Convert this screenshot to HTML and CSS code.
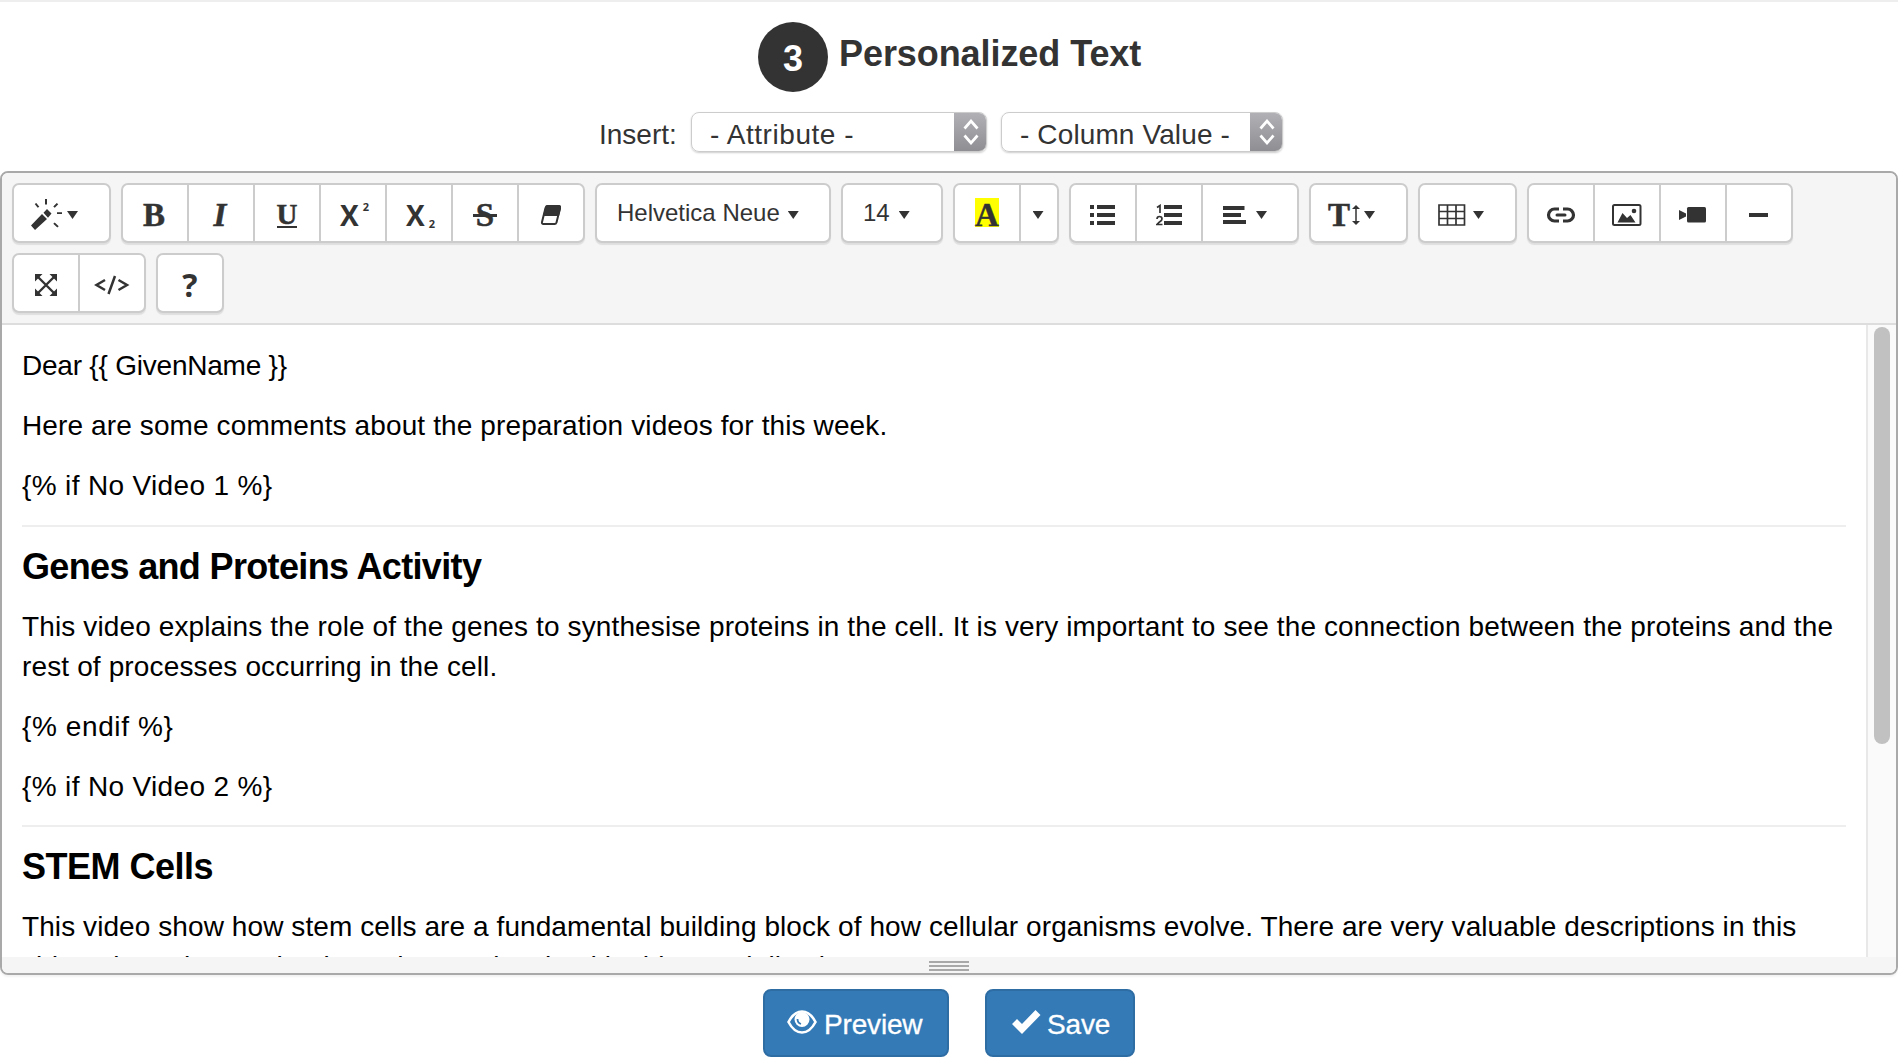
FILE: index.html
```html
<!DOCTYPE html>
<html lang="en">
<head>
<meta charset="utf-8">
<title>Personalized Text</title>
<link rel="stylesheet" href="styles.css">
</head>
<body>
<header class="step">
  <span class="step-number">3</span>
  <h1 class="step-title">Personalized Text</h1>
</header>
<div class="insert-row">
  <span class="insert-label">Insert:</span>
  <div class="select select-attribute"><span class="select-text attr-text">- Attribute -</span><span class="select-arrows"><svg width="16" height="26" viewBox="0 0 16 26"><path d="M1.500 9.500 8 2l6.500 7.500M1.500 16.500 8 24l6.500-7.500"/></svg></span></div>
  <div class="select select-column"><span class="select-text col-text">- Column Value -</span><span class="select-arrows"><svg width="16" height="26" viewBox="0 0 16 26"><path d="M1.500 9.500 8 2l6.500 7.500M1.500 16.500 8 24l6.500-7.500"/></svg></span></div>
</div>
<main class="editor">
  <div class="toolbar">
    <div class="group">
      <button class="btn w99 magic"><svg width="32" height="31" viewBox="0 0 32 34" preserveAspectRatio="none"><path d="M0 29 11 16.500l5 5.500L4 34zM12.500 15 16 11l4.500 5-3.500 4.500z" fill="#333"/><path d="M15 0v6M4.500 5l3 4M26.500 5l-3.500 4M26 15.500h5M23 26.500l4 4" stroke="#333" stroke-width="2" fill="none"/></svg><i class="caret"></i></button>
    </div>
    <div class="group">
      <button class="btn serif">B</button>
      <button class="btn serif italic">I</button>
      <button class="btn"><span class="serif under">U</span></button>
      <button class="btn script-btn">X<span class="sup">2</span></button>
      <button class="btn script-btn">X<span class="sub">2</span></button>
      <button class="btn"><span class="serif strike">S</span></button>
      <button class="btn"><svg width="22" height="22" viewBox="0 0 22 22"><path d="M7.500 2h10.500q2.500 0 2 2.500l-3.500 14q-.500 1.500-2 1.500H3.500q-2 0-1.500-2L5.500 4q.500-2 2-2z" fill="#fff" stroke="#333" stroke-width="2"/><path d="M7 1h12q2.500 0 2 3l-2 8H3l2-8q.500-3 2-3z" fill="#333"/></svg></button>
    </div>
    <div class="group">
      <button class="btn font-name"><span>Helvetica Neue</span><i class="caret"></i></button>
    </div>
    <div class="group">
      <button class="btn font-size"><span>14</span><i class="caret"></i></button>
    </div>
    <div class="group">
      <button class="btn"><span class="serif highlight">A</span></button>
      <button class="btn drop"><i class="caret"></i></button>
    </div>
    <div class="group">
      <button class="btn"><svg width="26" height="20" viewBox="0 0 26 20"><path d="M0 0h4v4H0zM7 0h18v4H7zM0 8h4v4H0zM7 8h18v4H7zM0 16h4v4H0zM7 16h18v4H7z" fill="#333"/></svg></button>
      <button class="btn"><svg width="26" height="22" viewBox="0 0 26 22"><path d="M8 1h18v4H8zM8 9h18v4H8zM8 17h18v4H8z" fill="#333"/><path d="M1 3.500 4 1.500V9M1 15q0-2.500 2.500-2.500T6 15q0 1.500-2.500 3L1 20.500h5.500" stroke="#333" stroke-width="1.700" fill="none"/></svg></button>
      <button class="btn align"><svg width="24" height="18" viewBox="0 0 24 18"><path d="M0 0h21.500v4H0zM0 7h18v4H0zM0 14h23v4H0z" fill="#333"/></svg><i class="caret"></i></button>
    </div>
    <div class="group">
      <button class="btn w99 height"><span class="serif">T</span><svg width="8" height="20" viewBox="0 0 8 20"><path d="M4 2v16" stroke="#333" stroke-width="1.500"/><path d="M4 0l4 4H0zM4 20l4-4H0z" fill="#333"/></svg><i class="caret"></i></button>
    </div>
    <div class="group">
      <button class="btn w99 table"><svg width="28" height="22" viewBox="0 0 28 22"><path d="M1 1h25.500v20H1zM1 7.500h25.500M1 14.500h25.500M9.500 1v20M18 1v20" stroke="#333" stroke-width="1.700" fill="none"/></svg><i class="caret"></i></button>
    </div>
    <div class="group">
      <button class="btn"><svg width="30" height="16" viewBox="0 0 30 16"><path d="M13 2H8.500a6 6 0 0 0 0 12H13M17 2h4.500a6 6 0 0 1 0 12H17" stroke="#333" stroke-width="3.200" fill="none"/><path d="M11 8h8" stroke="#333" stroke-width="3" stroke-linecap="round"/></svg></button>
      <button class="btn"><svg width="30" height="22" viewBox="0 0 30 22"><rect x="1" y="1" width="27.500" height="20" rx="1.500" fill="none" stroke="#333" stroke-width="2"/><path d="M5.500 18.500 10.500 9l4.500 5 3.500-3 5 7.500z" fill="#333"/><circle cx="22" cy="7" r="2.300" fill="#333"/></svg></button>
      <button class="btn nudge"><svg width="27" height="16" viewBox="0 0 27 16"><rect x="8" y="0" width="19" height="15.500" rx="1.500" fill="#333"/><path d="M0 3l7 3.500v3L0 13z" fill="#333"/></svg></button>
      <button class="btn nudge"><svg width="19" height="4" viewBox="0 0 19 4"><path d="M0 0h19v4H0z" fill="#333"/></svg></button>
    </div>
    <div class="group">
      <button class="btn"><svg width="22" height="22" viewBox="0 0 22 22"><path d="M3 3l16 16M19 3 3 19" stroke="#333" stroke-width="2.400"/><path d="M0 0h7.500L0 7.500zM22 0v7.500L14.500 0zM0 22v-7.500L7.500 22zM22 22h-7.500l7.500-7.500z" fill="#333"/></svg></button>
      <button class="btn"><svg width="36" height="20" viewBox="0 0 36 20"><path d="M11 5 2.500 10 11 15M24.500 5 33 10l-8.500 5M21 1l-6.500 18" stroke="#333" stroke-width="2.500" fill="none"/></svg></button>
    </div>
    <div class="group">
      <button class="btn help">?</button>
    </div>
  </div>
  <div class="body">
    <div class="editable">
      <p><span class="t-dear">Dear {{ GivenName }}</span></p>
      <p><span class="t-here">Here are some comments about the preparation videos for this week.</span></p>
      <p><span class="t-if">{% if No Video 1 %}</span></p>
      <hr>
      <h3><span class="t-genes">Genes and Proteins Activity</span></h3>
      <p><span class="t-long">This video explains the role of the genes to synthesise proteins in the cell. It is very important to see the connection between the proteins and the</span><br><span class="t-rest">rest of processes occurring in the cell.</span></p>
      <p><span class="t-end">{% endif %}</span></p>
      <p><span class="t-if">{% if No Video 2 %}</span></p>
      <hr class="second">
      <h3><span class="t-stem">STEM Cells</span></h3>
      <p><span class="t-show">This video show how stem cells are a fundamental building block of how cellular organisms evolve. There are very valuable descriptions in this</span><br><span class="t-last">video about the mechanisms that are involved in this specialisation</span></p>
    </div>
    <div class="scrollbar"><div class="thumb"></div></div>
  </div>
  <div class="statusbar"><i></i><i></i><i></i></div>
</main>
<footer class="actions">
  <button class="action preview"><svg width="30" height="24" viewBox="0 0 30 24"><path d="M1.500 12Q7 1.500 15 1.500T28.500 12Q23 22.500 15 22.500T1.500 12z" fill="none" stroke="#fff" stroke-width="2.600"/><circle cx="15" cy="9.500" r="7.500" fill="#fff"/><path d="M10.500 9q0 4 3.500 5" stroke="#337ab7" stroke-width="1.800" fill="none"/></svg><span class="preview-text">Preview</span></button>
  <button class="action save"><svg width="29" height="24" viewBox="0 0 29 24"><path d="M0 14l5-5 5 5L23.500 0l5 5L10 24z" fill="#fff"/></svg><span class="save-text">Save</span></button>
</footer>
</body>
</html>
```

FILE: styles.css
```css
* { box-sizing: border-box; }
body {
  margin: 0;
  height: 1057px;
  overflow: hidden;
  border-top: 2px solid #eee;
  background: #fff;
  color: #333;
  font: 28px/40px "Liberation Sans", Arial, sans-serif;
  white-space: nowrap;
}
button { font: inherit; color: inherit; }
svg { display: block; flex: none; }

.step { display: flex; padding: 20px 0 0 758px; gap: 11px; height: 110px; }
.step-number {
  width: 70px; height: 70px; border-radius: 50%;
  background: #333; color: #fff;
  font-weight: bold; font-size: 36px; line-height: 73px; text-align: center;
}
.step-title { margin: 12px 0 0; font-size: 36px; line-height: 40px; letter-spacing: -.07px; }

.insert-row { display: flex; height: 59px; padding-left: 599px; }
.insert-label { width: 92px; padding-top: 3px; }
.select {
  display: flex; justify-content: space-between;
  height: 40px; border: 1px solid #ccc; border-radius: 8px;
  box-shadow: 0 1px 2px rgba(0,0,0,.2); overflow: hidden;
}
.select-attribute { width: 296px; margin-right: 14px; }
.select-column { width: 282px; }
.select-text { padding-left: 18px; padding-top: 2px; }
.attr-text { letter-spacing: .56px; }
.col-text { letter-spacing: .12px; }
.select-arrows {
  width: 33px; margin: -1px; flex: none;
  display: flex; align-items: center; justify-content: center;
  background: linear-gradient(#b2b1b6, #8e8d92);
}
.select-arrows path { fill: none; stroke: #fff; stroke-width: 2.700; }

.editor {
  height: 804px; border: 2px solid #a9a9a9; border-radius: 8px;
  overflow: hidden; display: flex; flex-direction: column;
  box-shadow: 0 2px 2px rgba(0,0,0,.05);
}
.toolbar {
  display: flex; flex-wrap: wrap; align-content: flex-start; gap: 10px;
  height: 152px; padding: 10px; flex: none;
  background: #f5f5f5; border-bottom: 2px solid #ddd;
}
.group {
  display: flex; height: 60px; border: 2px solid #ccc; border-radius: 7px;
  background: #fff; box-shadow: 0 2px 1px rgba(0,0,0,.09);
}
.btn {
  width: 64px; height: 56px; padding: 4px 0 0; border: 0; background: none;
  display: flex; align-items: center; justify-content: center;
}
.btn + .btn { border-left: 2px solid #ccc; width: 66px; }
.caret { width: 11px; height: 8px; background: #333; clip-path: polygon(0 0, 100% 0, 50% 100%); flex: none; }
.btn.w99 { width: 95px; justify-content: flex-start; }
.serif {
  font-family: "Liberation Serif", "Times New Roman", serif; font-weight: bold;
  font-size: 33px; line-height: 33px; -webkit-text-stroke: .5px #333;
}
.btn.serif, .nudge, .drop { padding-right: 2px; }
.italic { font-style: italic; }
.under { font-size: 29px; line-height: 24px; height: 26px; border-bottom: 2px solid #333; }
.strike { padding: 0 3px; background: linear-gradient(#333, #333) 0 15px / 100% 3px no-repeat; }
.script-btn { font: bold 28px/30px "Open Sans", sans-serif; padding-left: 3px; }
.sup, .sub { font-size: 11px; line-height: 12px; margin-left: 4px; }
.sup { margin-top: -16px; }
.sub { margin-top: 18px; }
.magic { padding: 2px 0 0 17px; gap: 4px; }
.magic .caret { margin-top: 2px; }
.group .font-name { width: 232px; font-size: 24px; gap: 8px; justify-content: flex-start; padding-left: 20px; }
.group .font-size { width: 98px; font-size: 24px; gap: 9px; justify-content: flex-start; padding-left: 20px; }
.font-name span, .font-size span { margin-top: -4px; }
.highlight { width: 24px; height: 29px; margin-top: -5px; background: #ff0; line-height: 34px; display: flex; justify-content: center; }
.btn + .btn.drop { width: 38px; }
.btn + .btn.align { width: 96px; justify-content: flex-start; padding-left: 20px; gap: 9px; }
.height { padding-left: 17px; gap: 2px; }
.height .caret { margin-left: 2px; }
.table { padding-left: 18px; gap: 7px; }
.help { font: bold 32px/32px "Open Sans", sans-serif; }

.body { flex: 1; min-height: 0; display: flex; background: #fff; color: #000; }
.editable { flex: 1; padding: 21px 20px 0; overflow: hidden; }
.editable p { margin: 0; }
.editable p + p { margin-top: 20px; }
.editable h3 { margin: 20px 0; font-size: 36px; line-height: 39px; }
.editable h3 + p { margin-top: 21px; }
.editable hr { margin: 19px 0 20px; border: 0; height: 2px; background: #eee; }
.editable .second { margin-top: 18px; }
.t-dear { letter-spacing: -.22px; }
.t-here { letter-spacing: .118px; }
.t-if { letter-spacing: .35px; }
.t-genes { letter-spacing: -.65px; }
.t-stem { letter-spacing: -.5px; }
.t-long { letter-spacing: .121px; }
.t-rest { letter-spacing: .135px; }
.t-end { letter-spacing: .6px; }
.t-show { letter-spacing: .081px; }
.t-last { letter-spacing: .12px; }
.scrollbar { width: 30px; border-left: 2px solid #e8e8e8; background: #fafafa; padding: 2px 6px; flex: none; }
.thumb { height: 417px; border-radius: 8px; background: #c1c1c1; }
.statusbar { height: 16px; flex: none; background: #f5f5f5; display: flex; flex-direction: column; align-items: center; gap: 2px; padding-top: 4px; }
.statusbar i { width: 40px; height: 2px; background: #a9a9a9; }

.actions { display: flex; padding: 14px 0 0 763px; gap: 36px; }
.action {
  height: 68px; border: 2px solid #2e6da4; border-radius: 8px;
  background: #337ab7; color: #fff; padding: 0 0 0 22px;
  display: flex; align-items: center; gap: 7px;
}
.action svg { margin-bottom: 3px; }
.action span { margin-top: 3px; -webkit-text-stroke: .3px #fff; }
.preview { width: 186px; }
.preview-text { letter-spacing: -.17px; }
.save { width: 150px; padding-left: 25px; gap: 6px; }
.save-text { letter-spacing: -.15px; }
```
